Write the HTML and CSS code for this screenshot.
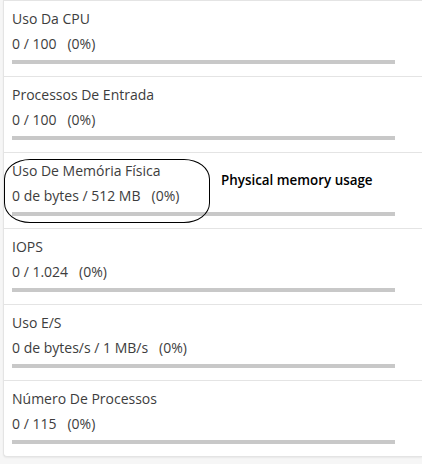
FILE: index.html
```html
<!DOCTYPE html>
<html lang="pt">
<head>
<meta charset="utf-8">
<link rel="stylesheet" href="styles.css">
</head>
<body>
<div class="page">
  <div class="card">
    <div class="row">
      <div class="title">Uso Da CPU</div>
      <div class="value">0 / 100<span class="pct">(0%)</span></div>
      <div class="bar"></div>
    </div>
    <div class="row">
      <div class="title">Processos De Entrada</div>
      <div class="value">0 / 100<span class="pct">(0%)</span></div>
      <div class="bar"></div>
    </div>
    <div class="row annotated">
      <div class="title">Uso De Memória Física</div>
      <div class="value">0 de bytes / 512 MB<span class="pct">(0%)</span></div>
      <div class="bar"></div>
      <div class="oval"></div>
      <div class="note">Physical memory usage</div>
    </div>
    <div class="row">
      <div class="title">IOPS</div>
      <div class="value">0 / 1.024<span class="pct">(0%)</span></div>
      <div class="bar"></div>
    </div>
    <div class="row">
      <div class="title">Uso E/S</div>
      <div class="value">0 de bytes/s / 1 MB/s<span class="pct">(0%)</span></div>
      <div class="bar"></div>
    </div>
    <div class="row">
      <div class="title">Número De Processos</div>
      <div class="value">0 / 115<span class="pct">(0%)</span></div>
      <div class="bar"></div>
    </div>
  </div>
</div>
</body>
</html>
```
FILE: styles.css
```css
html, body {
  margin: 0;
  padding: 0;
  background: #ffffff;
}
.page {
  width: 422px;
  height: 464px;
  background: #f6f6f6;
  padding-left: 3px;
  box-sizing: border-box;
  overflow: hidden;
}
.card {
  background: #ffffff;
  border: 1px solid #e4e4e4;
  border-right: none;
  border-radius: 0 0 0 4px;
  box-shadow: 0 1px 2px rgba(0,0,0,0.06);
  font-family: "Open Sans", "Noto Sans", sans-serif;
  font-size: 14px;
  color: #3d3d3d;
}
.row {
  position: relative;
  padding: 8px 27px 12px 8px;
  border-bottom: 1px solid #e4e4e4;
}
.row:last-child {
  border-bottom: none;
}
.title {
  line-height: 20px;
}
.value {
  line-height: 20px;
  margin-top: 5px;
}
.pct {
  margin-left: 11px;
}
.bar {
  height: 4px;
  background: #c8c8c8;
  margin-top: 6px;
}
.oval {
  position: absolute;
  left: 0;
  top: 6px;
  width: 206px;
  height: 64px;
  border: 1px solid #000;
  border-radius: 26px / 20px;
  box-sizing: border-box;
}
.note {
  position: absolute;
  left: 217px;
  top: 17px;
  font-size: 13.4px;
  font-weight: 600;
  color: #000000;
  line-height: 20px;
}
```
